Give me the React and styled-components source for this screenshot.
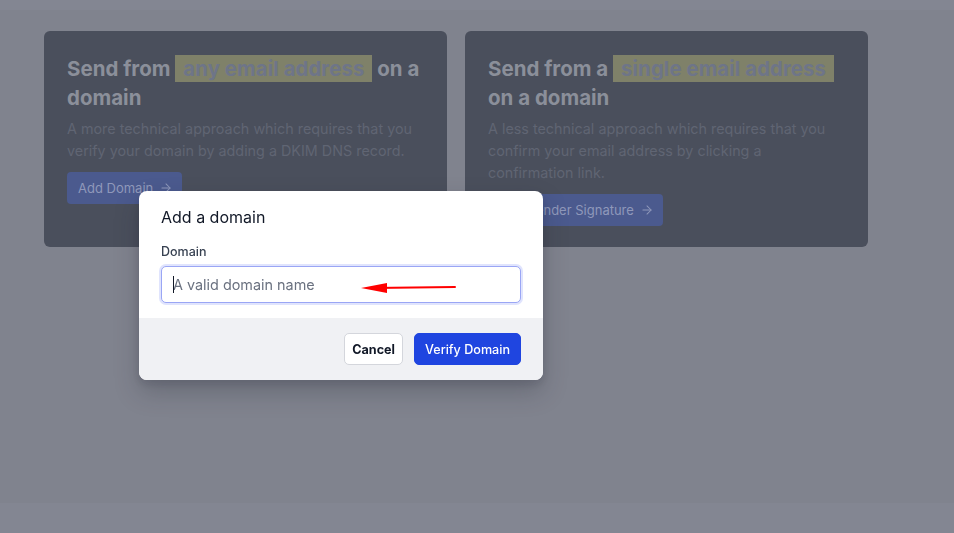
import React from 'react';
import styled, { createGlobalStyle } from 'styled-components';
import { ArrowRight } from 'lucide-react';

const GlobalStyle = createGlobalStyle`
  html, body {
    margin: 0;
    padding: 0;
    background: #838692;
    font-family: Inter, "Noto Sans", sans-serif;
  }
  * { box-sizing: border-box; }
`;

const Page = styled.div`
  display: flex;
  flex-direction: column;
  min-height: 533px;
`;

const Strip = styled.div`
  height: 10px;
  background: #838692;
`;

const Section = styled.div`
  height: 493px;
  background: #80838e;
  padding: 21px 44px 0;
`;

const Cards = styled.div`
  display: grid;
  grid-template-columns: 403px 403px;
  gap: 18px;
  align-items: stretch;
`;

const Card = styled.div`
  background: #4a4f5c;
  border-radius: 6px;
  padding: 23px 22px 22px 23px;
  height: 216px;
`;

const CardTitle = styled.h2`
  margin: 0;
  font-size: 20.5px;
  line-height: 29px;
  font-weight: 700;
  color: #8b8f9a;
`;

const Mark = styled.span`
  background: #7f8169;
  color: #6e7588;
  padding: 1px 8px;
`;

const Desc = styled.p`
  margin: 6px 0 0;
  font-size: 14.35px;
  line-height: 22px;
  color: #606573;
`;

const CardButton = styled.div`
  display: inline-flex;
  align-items: center;
  gap: 6px;
  height: 32px;
  margin-top: 10px;
  padding: 0 9px 0 11px;
  border-radius: 4px;
  background: #4b5a8e;
  color: #8f98ba;
  font-size: 13px;
`;

const Modal = styled.div`
  position: fixed;
  top: 191px;
  left: 139px;
  width: 404px;
  background: #ffffff;
  border-radius: 8px;
  overflow: hidden;
  box-shadow: 0 12px 24px rgba(30, 34, 48, 0.25), 0 4px 8px rgba(30, 34, 48, 0.12);
`;

const ModalBody = styled.div`
  padding: 15px 22px 15px;
`;

const ModalTitle = styled.h3`
  margin: 0;
  font-size: 16px;
  line-height: 22px;
  font-weight: 400;
  color: #111827;
`;

const Label = styled.label`
  display: block;
  margin-top: 16px;
  font-size: 12.5px;
  line-height: 16px;
  font-weight: 500;
  color: #374151;
`;

const InputWrap = styled.div`
  position: relative;
  margin-top: 6px;
`;

const Input = styled.input`
  display: block;
  width: 100%;
  height: 37px;
  padding: 0 11px;
  border: 1px solid #9aa6f5;
  border-radius: 5px;
  box-shadow: 0 0 0 2px #e0e4fd;
  font-family: inherit;
  font-size: 14.4px;
  color: #111827;
  outline: none;
  &::placeholder {
    color: #6b7280;
  }
`;

const Caret = styled.span`
  position: absolute;
  left: 12px;
  top: 10px;
  width: 1px;
  height: 17px;
  background: #111827;
`;

const Arrow = styled.svg`
  position: absolute;
  left: 200px;
  top: 16px;
`;

const Footer = styled.div`
  display: flex;
  justify-content: flex-end;
  gap: 11px;
  padding: 15px 22px;
  background: #f0f1f4;
`;

const Button = styled.button`
  height: 32px;
  padding: 0 ${(p) => (p.$primary ? '10px' : '7px')};
  border-radius: 5px;
  border: 1px solid ${(p) => (p.$primary ? '#1f45e0' : '#d4d6dc')};
  background: ${(p) => (p.$primary ? '#1f45e0' : '#ffffff')};
  color: ${(p) => (p.$primary ? '#ffffff' : '#111827')};
  font-family: inherit;
  font-size: 12.6px;
  font-weight: ${(p) => (p.$primary ? 500 : 700)};
`;

export default function App() {
  return (
    <>
      <GlobalStyle />
      <Page>
        <Strip />
        <Section>
          <Cards>
            <Card>
              <CardTitle>
                Send from <Mark>any email address</Mark> on a domain
              </CardTitle>
              <Desc>
                A more technical approach which requires that you verify your domain by adding a DKIM DNS record.
              </Desc>
              <CardButton>
                Add Domain <ArrowRight size={14} strokeWidth={1.75} />
              </CardButton>
            </Card>
            <Card>
              <CardTitle>
                Send from a <Mark>single email address</Mark> on a domain
              </CardTitle>
              <Desc>
                A less technical approach which requires that you confirm your email address by clicking a confirmation link.
              </Desc>
              <CardButton>
                Add Sender Signature <ArrowRight size={14} strokeWidth={1.75} />
              </CardButton>
            </Card>
          </Cards>
        </Section>
        <Strip />
      </Page>
      <Modal>
        <ModalBody>
          <ModalTitle>Add a domain</ModalTitle>
          <Label>Domain</Label>
          <InputWrap>
            <Input placeholder="A valid domain name" />
            <Caret />
            <Arrow width="98" height="12" viewBox="0 0 98 12">
              <line x1="12" y1="6" x2="94" y2="5" stroke="#ff0000" strokeWidth="2" strokeLinecap="round" />
              <polygon points="0,6 26,1 26,11" fill="#ff0000" />
            </Arrow>
          </InputWrap>
        </ModalBody>
        <Footer>
          <Button>Cancel</Button>
          <Button $primary>Verify Domain</Button>
        </Footer>
      </Modal>
    </>
  );
}
